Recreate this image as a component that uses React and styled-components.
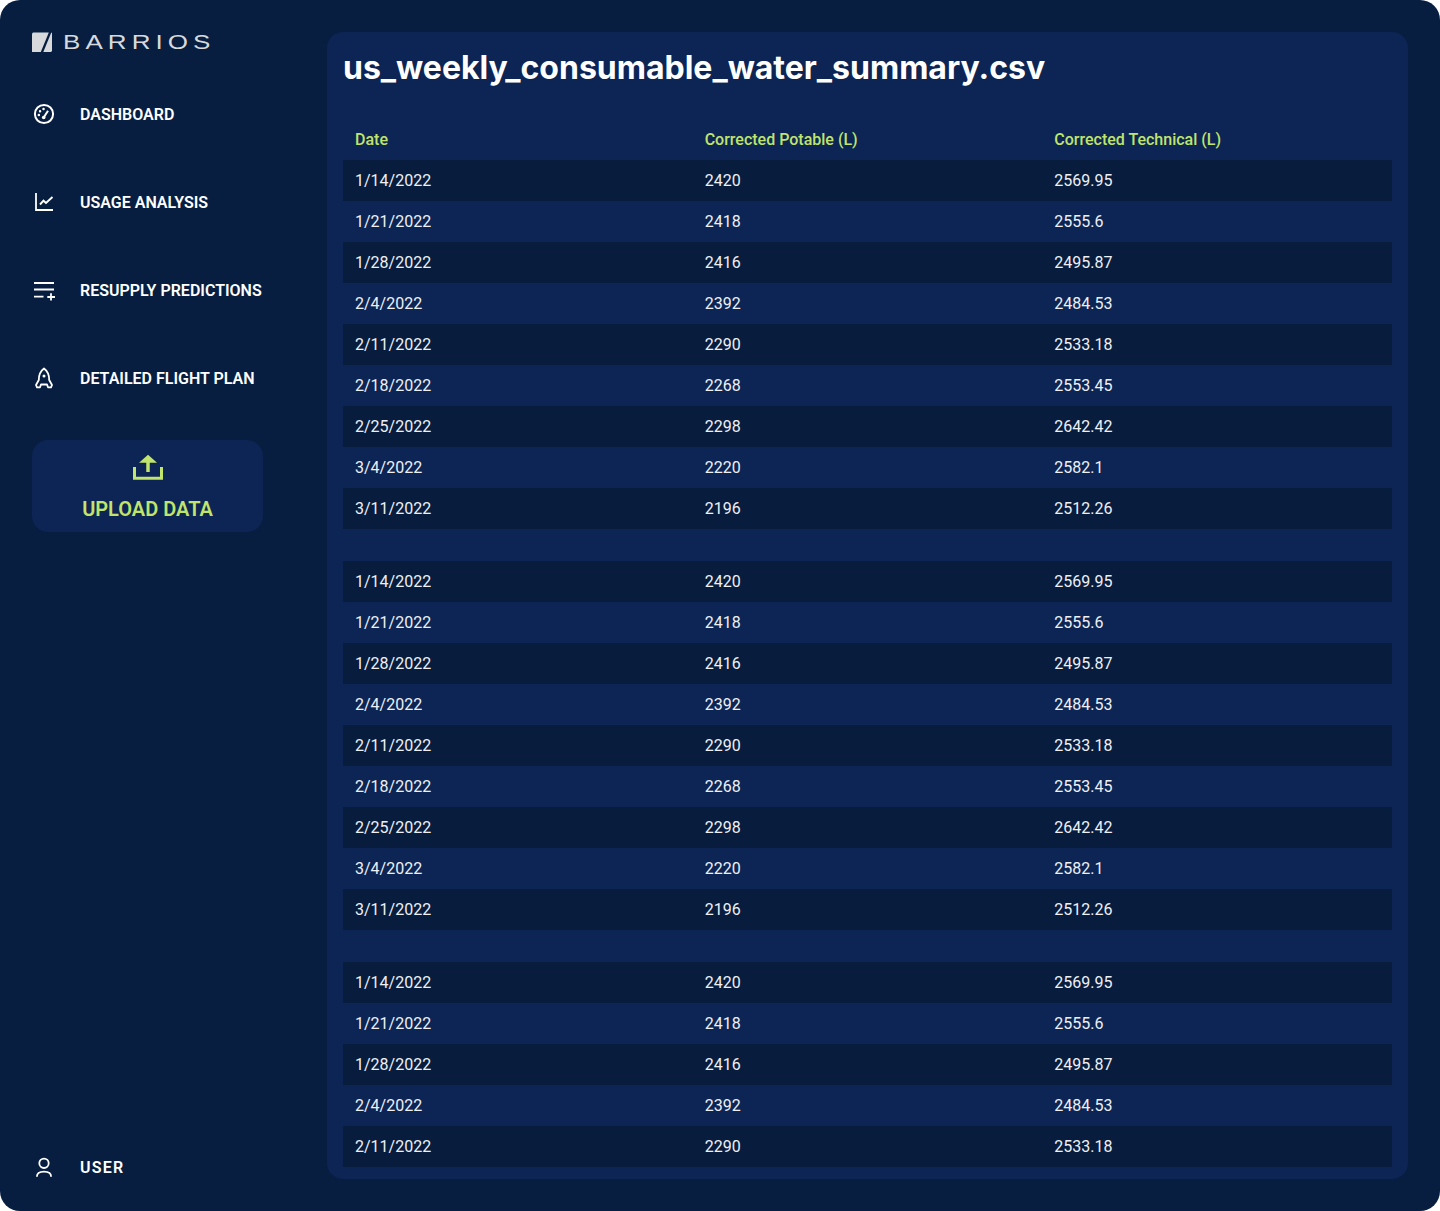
import styled, { createGlobalStyle } from "styled-components"

const Global = createGlobalStyle`
  html, body {
    margin: 0;
    padding: 0;
    background: #fff;
  }
  * {
    box-sizing: border-box;
  }
`

const Shell = styled.div`
  display: flex;
  width: 1440px;
  height: 1211px;
  padding: 32px;
  border-radius: 20px;
  background: #071e41;
  font-family: Roboto, "Liberation Sans", sans-serif;
  color: #fff;
  overflow: hidden;
`

const Sidebar = styled.aside`
  display: flex;
  flex-direction: column;
  flex: 0 0 295px;
`

const Logo = styled.div`
  display: flex;
  align-items: center;
  gap: 11px;
  height: 20px;
  margin-bottom: 50px;
`

const LogoText = styled.span`
  font-family: "Liberation Sans", sans-serif;
  font-size: 20px;
  line-height: 20px;
  letter-spacing: 3.9px;
  color: #d8d9da;
  white-space: nowrap;
  transform: scaleX(1.3);
  transform-origin: left center;
`

const Nav = styled.nav`
  display: flex;
  flex-direction: column;
  gap: 64px;
`

const NavItem = styled.a`
  display: flex;
  align-items: center;
  gap: 24px;
  height: 24px;
  font-size: 16px;
  font-weight: 600;
  line-height: 24px;
  white-space: nowrap;
  letter-spacing: ${(p) => (p.$wide ? "1.2px" : "0")};
`

const NavLabel = styled.span`
  margin-top: 2px;
`

const IconSvg = styled.svg`
  flex: 0 0 24px;
  width: 24px;
  height: 24px;
  fill: none;
  stroke: #fff;
  stroke-width: 2;
`

const UploadCard = styled.button`
  display: flex;
  flex-direction: column;
  align-items: center;
  width: 231px;
  height: 92px;
  margin-top: 50px;
  padding: 12px 0 0;
  border: 0;
  border-radius: 16px;
  background: #0c2554;
  color: #c0e46c;
  font-family: inherit;
  font-size: 20px;
  font-weight: 600;
  line-height: 24px;
`

const UploadIcon = styled.svg`
  width: 36px;
  height: 32px;
  margin-bottom: 13px;
  fill: none;
  stroke: #c0e46c;
  stroke-width: 3;
`

const Spacer = styled.div`
  flex: 1;
`

const Panel = styled.main`
  flex: 1;
  min-width: 0;
  padding: 16px 16px 12px;
  border-radius: 16px;
  background: #0c2554;
`

const Title = styled.h1`
  margin: 0 0 31px;
  font-family: Inter, "Liberation Sans", sans-serif;
  font-size: 32px;
  font-weight: 700;
  line-height: 40px;
  color: #fff;
`

const Table = styled.table`
  width: 100%;
  border-collapse: collapse;
  table-layout: fixed;
  font-size: 16px;
`

const HeadCell = styled.th`
  height: 41px;
  padding: 0 12px;
  color: #c0e46c;
  font-weight: 500;
  text-align: left;
`

const Row = styled.tr`
  background: ${(p) => (p.$dark ? "#081c3e" : "transparent")};
`

const Cell = styled.td`
  height: 41px;
  padding: 0 12px;
  color: #eef0f4;
  font-weight: 400;
`

const Gap = styled.tr`
  height: 32px;
`

const dataRows = [
  ["1/14/2022", "2420", "2569.95"],
  ["1/21/2022", "2418", "2555.6"],
  ["1/28/2022", "2416", "2495.87"],
  ["2/4/2022", "2392", "2484.53"],
  ["2/11/2022", "2290", "2533.18"],
  ["2/18/2022", "2268", "2553.45"],
  ["2/25/2022", "2298", "2642.42"],
  ["3/4/2022", "2220", "2582.1"],
  ["3/11/2022", "2196", "2512.26"],
]

const groups = [dataRows, dataRows, dataRows.slice(0, 5)]

function LogoMark() {
  return (
    <svg width="20" height="20" viewBox="0 0 20 20">
      <path d="M0 1.5 1 .5H16.8L8.8 20H0Z" fill="#d8d9da" />
      <path d="M19.3 .5 20 1V19L19 20H11.3Z" fill="#d8d9da" />
    </svg>
  )
}

function GaugeIcon() {
  return (
    <IconSvg viewBox="0 0 24 24">
      <circle cx="12" cy="12" r="9.1" />
      <path d="M11.7 15.5 16 8.7" strokeWidth="2" />
      <circle cx="11.7" cy="15.5" r="1.8" fill="#fff" stroke="none" />
      <path d="M6.800 13h.1M8 9.300h.1M11.500 7h.1" strokeLinecap="round" strokeWidth="2.4" />
    </IconSvg>
  )
}

function ChartIcon() {
  return (
    <IconSvg viewBox="0 0 24 24">
      <path d="M4 3V20H21" strokeWidth="1.8" />
      <path d="M8 14.5 11.500 10.700 14 13 20.500 7" strokeWidth="1.9" />
    </IconSvg>
  )
}

function PlaylistIcon() {
  return (
    <IconSvg viewBox="0 0 24 24">
      <path d="M2 5H22M2 11.500H22M2 18.700H11.500M15.300 19H23M19 15.300V22.500" strokeWidth="1.8" />
    </IconSvg>
  )
}

function RocketIcon() {
  return (
    <IconSvg viewBox="0 0 24 24">
      <path
        d="M12 2.500C15.500 5 17.200 9.500 17.200 14L20 19 19 21.300H16L15 18.500H9L8 21.300H5L4 19 6.800 14C6.800 9.500 8.500 5 12 2.500Z"
        strokeWidth="1.8"
        strokeLinejoin="round"
      />
      <circle cx="12" cy="10" r="1.5" fill="#fff" stroke="none" />
    </IconSvg>
  )
}

function UserIcon() {
  return (
    <IconSvg viewBox="0 0 24 24">
      <circle cx="12" cy="8.300" r="4.700" strokeWidth="1.8" />
      <path d="M4.900 21.800C4.900 18.500 8 16.700 12 16.700S19.100 18.500 19.100 21.800" strokeWidth="1.8" />
    </IconSvg>
  )
}

export default function App() {
  return (
    <>
      <Global />
      <Shell>
        <Sidebar>
          <Logo>
            <LogoMark />
            <LogoText>BARRIOS</LogoText>
          </Logo>
          <Nav>
            <NavItem>
              <GaugeIcon />
              <NavLabel>DASHBOARD</NavLabel>
            </NavItem>
            <NavItem>
              <ChartIcon />
              <NavLabel>USAGE ANALYSIS</NavLabel>
            </NavItem>
            <NavItem>
              <PlaylistIcon />
              <NavLabel>RESUPPLY PREDICTIONS</NavLabel>
            </NavItem>
            <NavItem>
              <RocketIcon />
              <NavLabel>DETAILED FLIGHT PLAN</NavLabel>
            </NavItem>
          </Nav>
          <UploadCard>
            <UploadIcon viewBox="0 0 36 32">
              <path d="M4.500 15V26.300H31.500V15" />
              <path d="M18 10V20" strokeWidth="3.5" />
              <path d="M18 2.700 27 10.700H9Z" fill="#c0e46c" stroke="none" />
            </UploadIcon>
            UPLOAD DATA
          </UploadCard>
          <Spacer />
          <NavItem $wide>
            <UserIcon />
            <NavLabel>USER</NavLabel>
          </NavItem>
        </Sidebar>
        <Panel>
          <Title>us_weekly_consumable_water_summary.csv</Title>
          <Table>
            <thead>
              <tr>
                <HeadCell>Date</HeadCell>
                <HeadCell>Corrected Potable (L)</HeadCell>
                <HeadCell>Corrected Technical (L)</HeadCell>
              </tr>
            </thead>
            {groups.map((rows, g) => (
              <tbody key={g}>
                {g > 0 && (
                  <Gap>
                    <td colSpan={3} />
                  </Gap>
                )}
                {rows.map((r, i) => (
                  <Row key={i} $dark={i % 2 === 0}>
                    <Cell>{r[0]}</Cell>
                    <Cell>{r[1]}</Cell>
                    <Cell>{r[2]}</Cell>
                  </Row>
                ))}
              </tbody>
            ))}
          </Table>
        </Panel>
      </Shell>
    </>
  )
}
